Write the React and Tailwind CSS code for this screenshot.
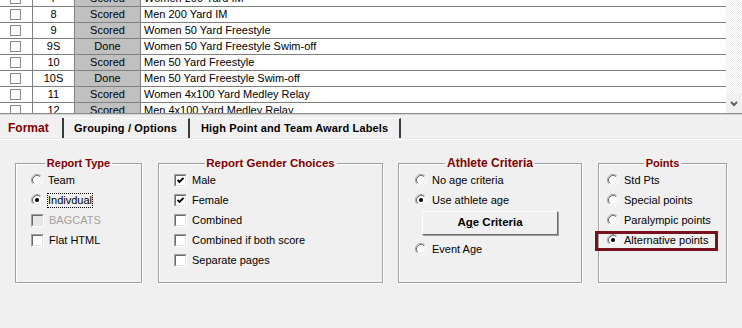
import React from "react";

const rows = [
  ["7", "Scored", "Women 200 Yard IM"],
  ["8", "Scored", "Men 200 Yard IM"],
  ["9", "Scored", "Women 50 Yard Freestyle"],
  ["9S", "Done", "Women 50 Yard Freestyle Swim-off"],
  ["10", "Scored", "Men 50 Yard Freestyle"],
  ["10S", "Done", "Men 50 Yard Freestyle Swim-off"],
  ["11", "Scored", "Women 4x100 Yard Medley Relay"],
  ["12", "Scored", "Men 4x100 Yard Medley Relay"],
];

function Radio({ checked }) {
  return (
    <svg width="12" height="12" viewBox="0 0 12 12" className="shrink-0">
      <circle cx="6" cy="6" r="5.5" fill="#ffffff" />
      <path d="M2.11 9.89 A5.5 5.5 0 0 1 9.89 2.11" fill="none" stroke="#a0a0a0" strokeWidth="1" />
      <path d="M9.89 2.11 A5.5 5.5 0 0 1 2.11 9.89" fill="none" stroke="#ffffff" strokeWidth="1" />
      <path d="M2.82 9.18 A4.5 4.5 0 0 1 9.18 2.82" fill="none" stroke="#696969" strokeWidth="1" />
      <path d="M9.18 2.82 A4.5 4.5 0 0 1 2.82 9.18" fill="none" stroke="#e3e3e3" strokeWidth="1" />
      {checked && <circle cx="6" cy="6" r="2" fill="#000000" />}
    </svg>
  );
}

function Check({ checked, disabled }) {
  return (
    <span className="shrink-0 w-[13px] h-[13px] border-t border-l border-t-[#a0a0a0] border-l-[#a0a0a0] border-r border-b border-r-white border-b-white flex">
      <span
        className={
          "flex-1 border-t border-l border-t-[#696969] border-l-[#696969] border-r border-b border-r-[#e3e3e3] border-b-[#e3e3e3] flex items-center justify-center " +
          (disabled ? "bg-[#e6e6e6]" : "bg-white")
        }
      >
        {checked && (
          <svg width="7" height="7" viewBox="0 0 7 7">
            <path d="M0.5 3 L2.5 5 L6.5 1" fill="none" stroke="#000" strokeWidth="1.8" />
          </svg>
        )}
      </span>
    </span>
  );
}

function Group({ title, className, titleClass, children }) {
  return (
    <div
      className={
        "relative h-[120px] border border-[#a0a0a0] shadow-[inset_1px_1px_0_#ffffff,1px_1px_0_#ffffff] pt-[6px] " +
        className
      }
    >
      <div
        className={
          "absolute top-[-8px] left-1/2 -translate-x-1/2 px-[2px] bg-[#f0f0f0] font-bold leading-[15px] text-[#800000] whitespace-nowrap " +
          (titleClass || "text-[11px]")
        }
      >
        {title}
      </div>
      {children}
    </div>
  );
}

export default function App() {
  return (
    <div className="w-[742px] h-[328px] bg-[#f0f0f0] overflow-hidden font-['Liberation_Sans',Arial,sans-serif] text-[11px] text-black">
      {/* Event list */}
      <div className="flex h-[113px] bg-white">
        <div className="w-[726px] overflow-hidden">
          <div className="mt-[-9px]">
            {rows.map(([n, s, e]) => (
              <div key={n} className="flex h-[16px] border-b border-[#808080] leading-[15px]">
                <div className="w-[33px] border-r border-[#808080] flex items-center">
                  <span className="ml-[10px] w-[11px] h-[11px] border border-[#8a8a8a] bg-white" />
                </div>
                <div className="w-[42px] border-r border-[#808080] text-center">{n}</div>
                <div className="w-[66px] border-r border-[#808080] bg-[#c0c0c0] text-center">{s}</div>
                <div className="flex-1 pl-[3px] whitespace-nowrap">{e}</div>
              </div>
            ))}
          </div>
        </div>
        <div className="w-[16px] flex flex-col">
          <div className="flex-1 bg-[repeating-conic-gradient(#ffffff_0_25%,#ececec_0_50%)] bg-[length:2px_2px]" />
          <div className="h-[19px] bg-[#f0f0f0] flex items-center justify-center">
            <svg width="8" height="6" viewBox="0 0 8 6">
              <polyline points="1,1 4,4 7,1" fill="none" stroke="#606060" strokeWidth="2" />
            </svg>
          </div>
        </div>
      </div>
      <div className="h-px bg-[#8c8c8c]" />
      <div className="h-px bg-[#d4d4d4]" />

      {/* Tabs */}
      <div className="flex items-end h-[23px] font-bold tracking-[0.15px]">
        <div className="w-[64px] h-[20px] pl-[8px] flex items-center border-r-2 border-r-[#3a3a3a] text-[#800000] text-[12px] tracking-normal">
          Format
        </div>
        <div className="w-[126px] h-[20px] pl-[10px] flex items-center border-t border-t-white border-r-2 border-r-[#3a3a3a] whitespace-nowrap">
          Grouping / Options
        </div>
        <div className="w-[211px] h-[20px] pl-[11px] flex items-center border-t border-t-white border-r-2 border-r-[#3a3a3a] whitespace-nowrap">
          High Point and Team Award Labels
        </div>
      </div>
      <div className="h-px bg-[#e8e8e8]" />
      <div className="h-px bg-white" />

      {/* Panel */}
      <div className="flex pl-[15px] mt-[23px]">
        <Group title="Report Type" className="w-[127px]">
          <div className="h-[20px] flex items-center pl-[15px]">
            <Radio />
            <span className="ml-[5px]">Team</span>
          </div>
          <div className="h-[20px] flex items-center pl-[15px]">
            <Radio checked />
            <span className="ml-[4px] border border-dotted border-black leading-[13px]">Indivdual</span>
          </div>
          <div className="h-[20px] flex items-center pl-[15px]">
            <Check disabled />
            <span className="ml-[5px] text-[#a0a0a0]">BAGCATS</span>
          </div>
          <div className="h-[20px] flex items-center pl-[15px]">
            <Check />
            <span className="ml-[5px]">Flat HTML</span>
          </div>
        </Group>

        <Group title="Report Gender Choices" className="w-[225px] ml-[16px]" titleClass="text-[11.5px]">
          {[
            ["Male", true],
            ["Female", true],
            ["Combined", false],
            ["Combined if both score", false],
            ["Separate pages", false],
          ].map(([l, c]) => (
            <div key={l} className="h-[20px] flex items-center pl-[15px]">
              <Check checked={c} />
              <span className="ml-[5px]">{l}</span>
            </div>
          ))}
        </Group>

        <Group title="Athlete Criteria" className="w-[184px] ml-[15px]" titleClass="text-[12px]">
          <div className="h-[20px] flex items-center pl-[16px]">
            <Radio />
            <span className="ml-[5px]">No age criteria</span>
          </div>
          <div className="h-[20px] flex items-center pl-[16px]">
            <Radio checked />
            <span className="ml-[5px]">Use athlete age</span>
          </div>
          <div className="ml-[23px] mt-[1px] w-[136px] h-[24px] bg-[#f0f0f0] border-t border-l border-t-white border-l-white border-r border-b border-r-[#696969] border-b-[#696969] shadow-[1px_1px_0_#a0a0a0] flex items-center justify-center font-bold text-[11.5px]">
            <span>
              A<span className="underline">g</span>e Criteria
            </span>
          </div>
          <div className="h-[20px] mt-[4px] flex items-center pl-[16px]">
            <Radio />
            <span className="ml-[5px]">Event Age</span>
          </div>
        </Group>

        <Group title="Points" className="w-[129px] ml-[16px]">
          {[
            ["Std Pts", false],
            ["Special points", false],
            ["Paralympic points", false],
            ["Alternative points", true],
          ].map(([l, c]) => (
            <div key={l} className="h-[20px] flex items-center pl-[8px]">
              <Radio checked={c} />
              <span className="ml-[5px] whitespace-nowrap">{l}</span>
            </div>
          ))}
          <div className="absolute left-[-4px] top-[67px] w-[123px] h-[20px] border-[3px] border-[#7a0f1e]" />
        </Group>
      </div>
    </div>
  );
}
